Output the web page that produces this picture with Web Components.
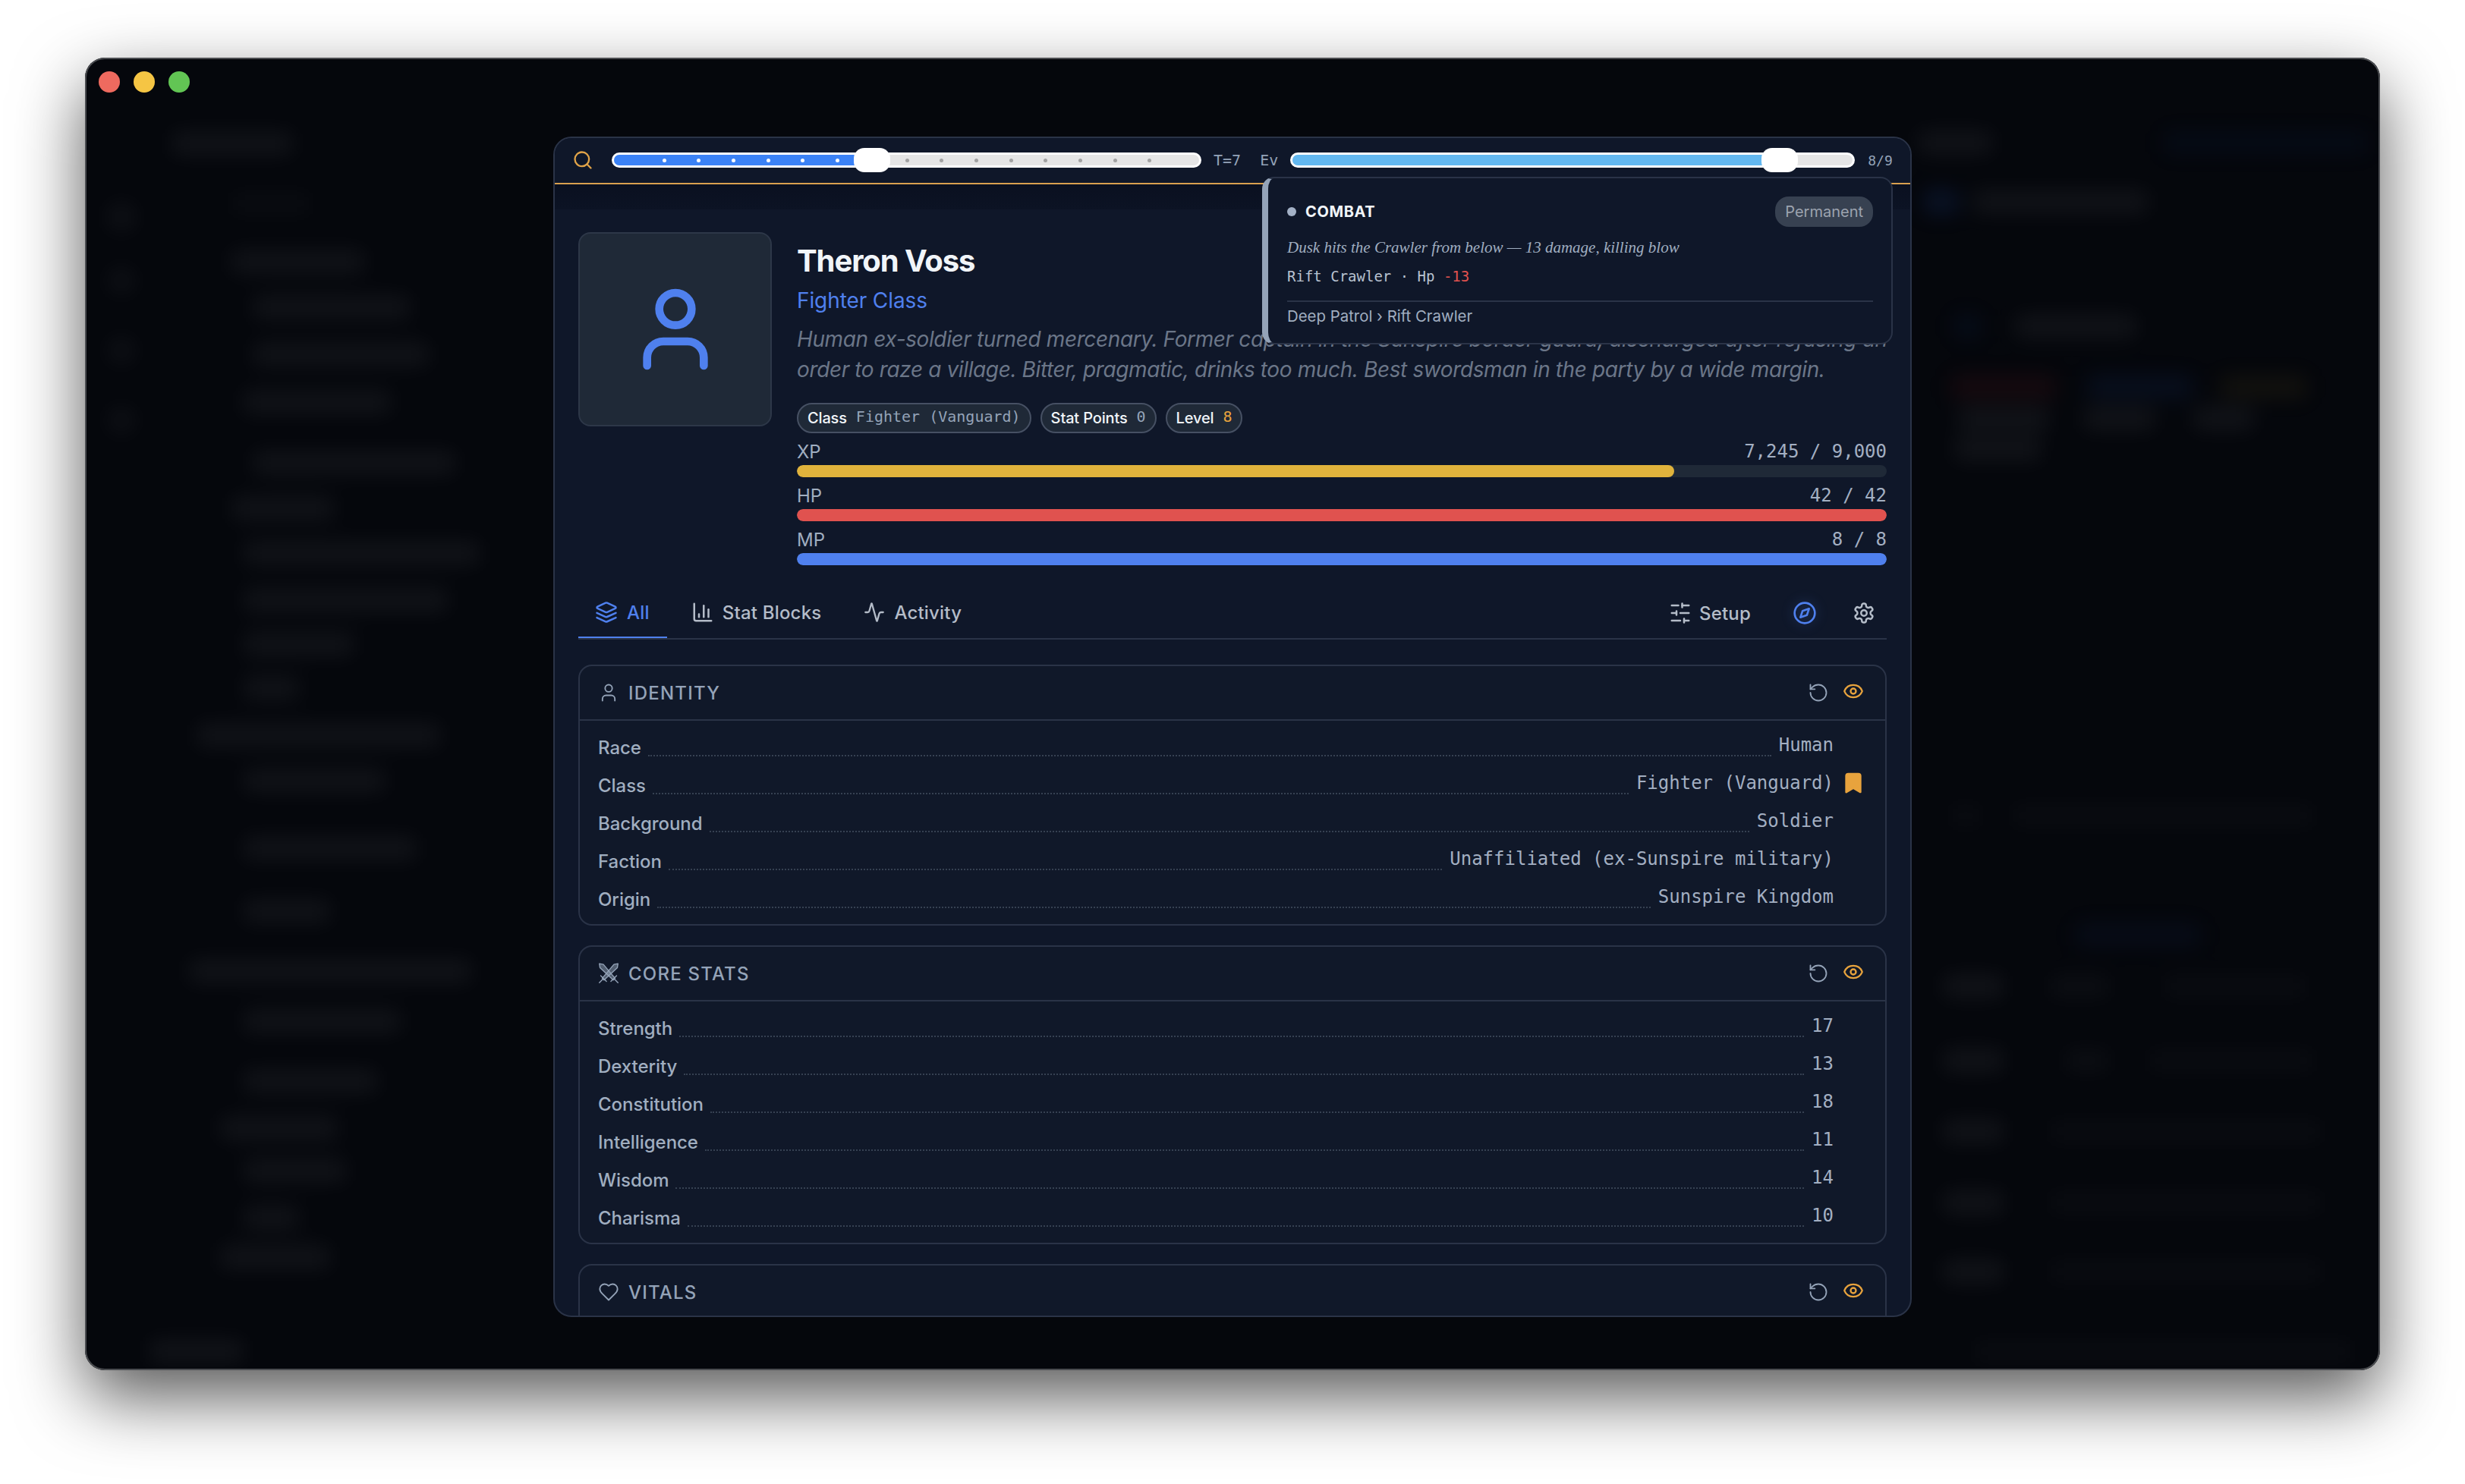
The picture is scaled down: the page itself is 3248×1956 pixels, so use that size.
<!DOCTYPE html>
<html>
<head>
<meta charset="utf-8">
<title>Theron Voss</title>
<style>
  html, body { margin: 0; background: #fff; }
  body { padding: 76px 112px 150px; font-family: Inter, "Liberation Sans", sans-serif; overflow: hidden; }
</style>
</head>
<body>
<mac-window>
  <app-backdrop></app-backdrop>
  <char-dialog>
    <top-bar slot="top"></top-bar>
    <event-tip slot="overlay" kind="COMBAT" tag="Permanent"
      line="Dusk hits the Crawler from below — 13 damage, killing blow"
      target="Rift Crawler · Hp " delta="-13" path="Deep Patrol › Rift Crawler"></event-tip>

    <char-header name="Theron Voss" role="Fighter Class"
      desc="Human ex-soldier turned mercenary. Former captain in the Sunspire border guard, discharged after refusing an<br>order to raze a village. Bitter, pragmatic, drinks too much. Best swordsman in the party by a wide margin.">
      <info-pill label="Class" value="Fighter (Vanguard)"></info-pill>
      <info-pill label="Stat Points" value="0"></info-pill>
      <info-pill label="Level" value="8" accent></info-pill>
      <stat-bar slot="bars" label="XP" value="7,245 / 9,000" pct="80.5" color="#e0b33c"></stat-bar>
      <stat-bar slot="bars" label="HP" value="42 / 42" pct="100" color="#e0524f"></stat-bar>
      <stat-bar slot="bars" label="MP" value="8 / 8" pct="100" color="#4f80ee"></stat-bar>
    </char-header>

    <tab-strip></tab-strip>

    <sheet-card title="IDENTITY" icon="user">
      <sheet-row label="Race" value="Human"></sheet-row>
      <sheet-row label="Class" value="Fighter (Vanguard)" mark></sheet-row>
      <sheet-row label="Background" value="Soldier"></sheet-row>
      <sheet-row label="Faction" value="Unaffiliated (ex-Sunspire military)"></sheet-row>
      <sheet-row label="Origin" value="Sunspire Kingdom"></sheet-row>
    </sheet-card>
    <sheet-card title="CORE STATS" icon="swords">
      <sheet-row label="Strength" value="17"></sheet-row>
      <sheet-row label="Dexterity" value="13"></sheet-row>
      <sheet-row label="Constitution" value="18"></sheet-row>
      <sheet-row label="Intelligence" value="11"></sheet-row>
      <sheet-row label="Wisdom" value="14"></sheet-row>
      <sheet-row label="Charisma" value="10"></sheet-row>
    </sheet-card>
    <sheet-card title="VITALS" icon="heart"></sheet-card>
  </char-dialog>
</mac-window>

<script>
const MONO = '"DejaVu Sans Mono", "Liberation Mono", monospace';

const ICONS = {
  search: '<circle cx="11" cy="11" r="8"/><path d="m21 21-4.3-4.3"/>',
  user: '<path d="M19 21v-2a4 4 0 0 0-4-4H9a4 4 0 0 0-4 4v2"/><circle cx="12" cy="7" r="4"/>',
  layers: '<path d="m12.83 2.18a2 2 0 0 0-1.66 0L2.6 6.08a1 1 0 0 0 0 1.83l8.58 3.91a2 2 0 0 0 1.66 0l8.58-3.9a1 1 0 0 0 0-1.83Z"/><path d="m22 17.65-9.17 4.16a2 2 0 0 1-1.66 0L2 17.65"/><path d="m22 12.65-9.17 4.16a2 2 0 0 1-1.66 0L2 12.65"/>',
  chart: '<path d="M3 3v16a2 2 0 0 0 2 2h16"/><path d="M18 17V9"/><path d="M13 17V5"/><path d="M8 17v-3"/>',
  activity: '<path d="M22 12h-2.48a2 2 0 0 0-1.93 1.46l-2.35 8.36a.25.25 0 0 1-.48 0L9.24 2.18a.25.25 0 0 0-.48 0l-2.35 8.36A2 2 0 0 1 4.49 12H2"/>',
  sliders: '<path d="M21 4h-7"/><path d="M10 4H3"/><path d="M21 12h-9"/><path d="M8 12H3"/><path d="M21 20h-5"/><path d="M12 20H3"/><path d="M14 2v4"/><path d="M8 10v4"/><path d="M16 18v4"/>',
  compass: '<circle cx="12" cy="12" r="10"/><path d="m16.24 7.76-2.12 6.36-6.36 2.12 2.12-6.36 6.36-2.12z"/>',
  gear: '<path d="M12.22 2h-.44a2 2 0 0 0-2 2v.18a2 2 0 0 1-1 1.73l-.43.25a2 2 0 0 1-2 0l-.15-.08a2 2 0 0 0-2.73.73l-.22.38a2 2 0 0 0 .73 2.73l.15.1a2 2 0 0 1 1 1.72v.51a2 2 0 0 1-1 1.74l-.15.09a2 2 0 0 0-.73 2.73l.22.38a2 2 0 0 0 2.73.73l.15-.08a2 2 0 0 1 2 0l.43.25a2 2 0 0 1 1 1.73V20a2 2 0 0 0 2 2h.44a2 2 0 0 0 2-2v-.18a2 2 0 0 1 1-1.73l.43-.25a2 2 0 0 1 2 0l.15.08a2 2 0 0 0 2.73-.73l.22-.39a2 2 0 0 0-.73-2.73l-.15-.08a2 2 0 0 1-1-1.74v-.5a2 2 0 0 1 1-1.74l.15-.09a2 2 0 0 0 .73-2.73l-.22-.38a2 2 0 0 0-2.73-.73l-.15.08a2 2 0 0 1-2 0l-.43-.25a2 2 0 0 1-1-1.73V4a2 2 0 0 0-2-2z"/><circle cx="12" cy="12" r="3"/>',
  undo: '<path d="M3 12a9 9 0 1 0 9-9 9.75 9.75 0 0 0-6.74 2.74L3 8"/><path d="M3 3v5h5"/>',
  eye: '<path d="M2.062 12.348a1 1 0 0 1 0-.696 10.75 10.75 0 0 1 19.876 0 1 1 0 0 1 0 .696 10.75 10.75 0 0 1-19.876 0"/><circle cx="12" cy="12" r="3"/>',
  heart: '<path d="M19 14c1.49-1.46 3-3.21 3-5.5A5.5 5.5 0 0 0 16.5 3c-1.76 0-3 .5-4.5 2-1.5-1.5-2.74-2-4.5-2A5.5 5.5 0 0 0 2 8.5c0 2.3 1.5 4.05 3 5.5l7 7Z"/>',
  swords: '<path fill="currentColor" fill-opacity=".5" d="M22.5 1 21.8 5.5 6.8 19.5 4.8 17.5 18 1.8Z"/><path fill="currentColor" fill-opacity=".5" d="M1.5 1 2.2 5.5 17.2 19.5 19.2 17.5 6 1.8Z"/><path d="M3 14.5 9.5 21M21 14.5 14.5 21M5.5 18.5 1.5 22.5M18.5 18.5 22.5 22.5"/>',
  bookmark: '<path d="m19 21-7-4-7 4V5a2 2 0 0 1 2-2h10a2 2 0 0 1 2 2v16z"/>',
};

class LuIcon extends HTMLElement {
  connectedCallback() {
    const size = this.getAttribute('size') || 28;
    const sw = this.getAttribute('stroke') || 2;
    const fill = this.hasAttribute('solid') ? 'currentColor' : 'none';
    this.attachShadow({ mode: 'open' }).innerHTML = `
      <style>:host { display: inline-flex; flex: none; } svg { display: block; }</style>
      <svg width="${size}" height="${size}" viewBox="0 0 24 24" fill="${fill}" stroke="currentColor"
        stroke-width="${sw}" stroke-linecap="round" stroke-linejoin="round">${ICONS[this.getAttribute('name')]}</svg>`;
  }
}
customElements.define('lu-icon', LuIcon);

class MacWindow extends HTMLElement {
  constructor() {
    super();
    this.attachShadow({ mode: 'open' }).innerHTML = `
      <style>
        :host {
          display: block; position: relative; width: 3024px; height: 1730px; box-sizing: border-box;
          border-radius: 26px; background: #05070c; overflow: hidden;
          box-shadow: 0 36px 90px rgba(0,0,0,.65);
        }
        .edge { position: absolute; inset: 0; border-radius: 26px; box-shadow: inset 0 0 0 2px #4a4c50; z-index: 4; }
        .lights { position: absolute; top: 18px; left: 18px; display: flex; gap: 18px; z-index: 3; }
        .lights span { width: 28px; height: 28px; border-radius: 50%; }
      </style>
      <div class="edge"></div>
      <div class="lights">
        <span style="background:#ee6a5f"></span><span style="background:#f5c544"></span><span style="background:#62c554"></span>
      </div>
      <slot></slot>`;
  }
}
customElements.define('mac-window', MacWindow);

// the app behind the modal, only ever seen through the blur
const GREY = 'rgba(255,255,255,.055)';
const BLUE = 'rgba(40,90,190,.16)';
const LEFT = [
  [189, [[226, 386, GREY]]], [268, [[304, 410, 'rgba(255,255,255,.025)']]], [345, [[304, 480, GREY]]],
  [405, [[333, 540, GREY]]], [467, [[333, 565, GREY]]], [530, [[320, 515, GREY]]], [610, [[333, 600, GREY]]],
  [670, [[305, 440, GREY]]], [729, [[321, 632, GREY]]], [791, [[321, 590, GREY]]], [849, [[321, 466, GREY]]],
  [907, [[321, 394, GREY]]], [969, [[259, 580, GREY]]], [1029, [[321, 507, GREY]]], [1118, [[321, 549, GREY]]],
  [1201, [[321, 435, GREY]]], [1280, [[249, 621, GREY]]], [1346, [[321, 528, GREY]]], [1425, [[321, 497, GREY]]],
  [1487, [[290, 445, GREY]]], [1543, [[321, 456, GREY]]], [1605, [[321, 394, GREY]]], [1657, [[290, 435, GREY]]],
  [1781, [[197, 321, GREY]]],
];
const RAIL = [[286, 40], [370, 36], [462, 36], [554, 36]];
const RIGHT = [
  [188, [[2527, 2625, GREY], [2850, 3120, 'rgba(40,90,190,.06)']]],
  [266, [[2535, 2580, BLUE], [2600, 2830, GREY]]],
  [430, [[2575, 2610, 'rgba(40,90,190,.08)'], [2655, 2815, GREY]]],
  [510, [[2570, 2710, 'rgba(190,40,40,.1)'], [2750, 2890, 'rgba(40,90,190,.1)'], [2925, 3040, 'rgba(190,150,40,.08)']]],
  [552, [[2580, 2700, GREY], [2745, 2840, GREY], [2890, 2970, GREY]]],
  [592, [[2575, 2690, GREY]]],
  [1075, [[2570, 2610, 'rgba(255,255,255,.025)'], [2650, 3050, 'rgba(255,255,255,.025)']]],
  [1232, [[2734, 2900, 'rgba(40,90,190,.07)']]],
  [1300, [[2560, 2640, GREY], [2700, 2780, 'rgba(255,255,255,.03)'], [2850, 3040, 'rgba(255,255,255,.025)']]],
  [1398, [[2560, 2640, GREY], [2720, 2780, 'rgba(255,255,255,.03)'], [2830, 3050, 'rgba(255,255,255,.025)']]],
  [1491, [[2560, 2640, GREY], [2700, 3060, 'rgba(255,255,255,.025)']]],
  [1585, [[2560, 2640, GREY], [2700, 3060, 'rgba(255,255,255,.025)']]],
  [1676, [[2560, 2640, GREY], [2700, 3060, 'rgba(255,255,255,.025)']]],
  [1781, [[2600, 3100, 'rgba(255,255,255,.025)']]],
];
const WIN_X = 112, WIN_Y = 76, ROW_H = 30, RAIL_W = 96;

function blurRows(rows, originX) {
  let y = WIN_Y;
  return rows.map(([cy, blobs]) => {
    const top = cy - ROW_H / 2 - y;
    y = cy + ROW_H / 2;
    let x = originX;
    const bits = blobs.map(([a, b, c]) => {
      const ml = a - x;
      x = b;
      return `<i style="margin-left:${ml}px;width:${b - a}px;background:${c}"></i>`;
    }).join('');
    return `<div class="row" style="margin-top:${top}px">${bits}</div>`;
  }).join('');
}

class AppBackdrop extends HTMLElement {
  constructor() {
    super();
    const rail = RAIL.map(([cy, s], i) => {
      const prev = i ? RAIL[i - 1][0] + RAIL[i - 1][1] / 2 : WIN_Y;
      return `<b style="margin-top:${cy - s / 2 - prev}px;width:${s}px;height:${s}px"></b>`;
    }).join('');
    this.attachShadow({ mode: 'open' }).innerHTML = `
      <style>
        :host { display: flex; height: 100%; filter: blur(14px); }
        .rail { width: ${RAIL_W}px; flex: none; display: flex; flex-direction: column; align-items: center; }
        .rail b { display: block; border-radius: 50%; background: rgba(255,255,255,.045); flex: none; }
        .col { flex: none; }
        .gap { flex: 1; }
        .row { display: flex; height: ${ROW_H}px; }
        .row i { display: block; height: 100%; border-radius: 6px; flex: none; }
      </style>
      <div class="rail">${rail}</div>
      <div class="col" style="width:560px">${blurRows(LEFT, WIN_X + RAIL_W)}</div>
      <div class="gap"></div>
      <div class="col" style="width:${3136 - 2500}px">${blurRows(RIGHT, 2500)}</div>`;
  }
}
customElements.define('app-backdrop', AppBackdrop);

class CharDialog extends HTMLElement {
  constructor() {
    super();
    this.attachShadow({ mode: 'open' }).innerHTML = `
      <style>
        :host {
          display: block; position: absolute; left: 617px; top: 104px; z-index: 2;
          width: 1790px; height: 1556px; box-sizing: border-box;
          background: #0f1729; border: 2px solid #2a3347; border-radius: 24px;
          color: #e5e7eb; font-family: Inter, "Liberation Sans", sans-serif;
        }
        .clip { height: 100%; border-radius: 22px; overflow: hidden; display: flex; flex-direction: column; }
        .scroll {
          flex: 1; min-height: 0; overflow: hidden; box-sizing: border-box;
          padding: 63px 31px 0 31px; display: flex; flex-direction: column;
          background: linear-gradient(#0a1020, #0c1324 33px, transparent 33px);
        }
      </style>
      <div class="clip">
        <slot name="top"></slot>
        <div class="scroll"><slot></slot></div>
      </div>
      <slot name="overlay"></slot>`;
  }
}
customElements.define('char-dialog', CharDialog);

class ScrubRange extends HTMLElement {
  connectedCallback() {
    const pos = +this.getAttribute('pos');
    const ticks = (this.getAttribute('ticks') || '').split(',').filter(Boolean).map(Number);
    const dots = ticks.map(t => {
      const p = (t + 0.5) / 17 * 100;
      return `<u style="left:${p}%;background:${p < pos ? '#fff' : '#a3a3a3'}"></u>`;
    }).join('');
    this.attachShadow({ mode: 'open' }).innerHTML = `
      <style>
        :host { display: block; position: relative; height: 20px; flex: none; }
        .track { height: 100%; box-sizing: border-box; border: 3px solid #fff; border-radius: 10px; background: #e5e5e5; overflow: hidden; }
        .fill { height: 100%; background: ${this.getAttribute('color')}; width: ${pos}%; }
        u { position: absolute; top: 8px; width: 5px; height: 5px; margin-left: -2px; border-radius: 50%; }
        .thumb { position: absolute; top: -6px; left: ${pos}%; margin-left: -24px; width: 48px; height: 32px; border-radius: 14px; background: #fff; }
      </style>
      <div class="track"><div class="fill"></div></div>${dots}<div class="thumb"></div>`;
  }
}
customElements.define('scrub-range', ScrubRange);

class TopBar extends HTMLElement {
  constructor() {
    super();
    this.attachShadow({ mode: 'open' }).innerHTML = `
      <style>
        :host {
          display: flex; align-items: center; height: 58px; flex: none; box-sizing: content-box;
          padding: 0 23px 1px; background: #0f1729; border-bottom: 2px solid #d9a04f;
          font: 20px ${MONO}; color: #94a3b8;
        }
        lu-icon { color: #e0a348; margin-right: 24px; }
        span { white-space: nowrap; }
      </style>
      <lu-icon name="search" size="28"></lu-icon>
      <scrub-range style="width:777px" pos="44.1" color="#3b82f6" ticks="1,2,3,4,5,6,8,9,10,11,12,13,14,15"></scrub-range>
      <span style="margin-left:16px">T=7</span>
      <span style="margin-left:25px">Ev</span>
      <scrub-range style="width:744px;margin-left:16px" pos="86.6" color="#63b8f0"></scrub-range>
      <span style="margin-left:17px;font-size:18px">8/9</span>`;
  }
}
customElements.define('top-bar', TopBar);

class EventTip extends HTMLElement {
  connectedCallback() {
    const a = n => this.getAttribute(n);
    this.attachShadow({ mode: 'open' }).innerHTML = `
      <style>
        :host {
          display: block; position: absolute; left: 932px; top: 51px; width: 831px; height: 221px;
          box-sizing: border-box; padding: 24px 24px 0 25px; background: #0f1729;
          border: 2px solid #2a3347; border-left: 8px solid #94a3b8; border-radius: 16px;
        }
        .head { display: flex; align-items: center; height: 40px; }
        .dot { width: 12px; height: 12px; border-radius: 50%; background: #a3b1c6; margin-right: 12px; }
        .kind { font-size: 20px; font-weight: 700; letter-spacing: .6px; color: #f1f5f9; }
        .tag { margin-left: auto; height: 40px; line-height: 40px; padding: 0 13px; border-radius: 18px; background: #374151; color: #9ca3af; font-size: 20px; }
        .line { font: italic 21px/26px "Liberation Serif", serif; color: #a0aec0; margin-top: 14px; }
        .fx { font: 19px/26px ${MONO}; color: #b8c2d0; margin-top: 12px; }
        .fx b { font-weight: 400; color: #e0524f; }
        .path { border-top: 2px solid #2a3347; margin-top: 19px; padding-top: 6px; font-size: 20.4px; line-height: 26px; color: #a0aec0; }
      </style>
      <div class="head"><span class="dot"></span><span class="kind">${a('kind')}</span><span class="tag">${a('tag')}</span></div>
      <div class="line">${a('line')}</div>
      <div class="fx">${a('target')}<b>${a('delta')}</b></div>
      <div class="path">${a('path')}</div>`;
  }
}
customElements.define('event-tip', EventTip);

class InfoPill extends HTMLElement {
  connectedCallback() {
    const accent = this.hasAttribute('accent');
    this.attachShadow({ mode: 'open' }).innerHTML = `
      <style>
        :host {
          display: inline-flex; align-items: center; gap: 12px; height: 40px; box-sizing: border-box;
          padding: 0 12px; border: 2px solid #465063; border-radius: 20px; background: #1f2937;
          font-size: 20px; font-weight: 500; letter-spacing: -.15px; color: #f1f5f9; white-space: nowrap;
        }
        b { font: 400 20px ${MONO}; letter-spacing: 0; color: ${accent ? '#e8a33d' : '#94a3b8'}; margin-bottom: 4px; }
      </style>
      <span>${this.getAttribute('label')}</span><b>${this.getAttribute('value')}</b>`;
  }
}
customElements.define('info-pill', InfoPill);

class StatBar extends HTMLElement {
  connectedCallback() {
    const a = n => this.getAttribute(n);
    this.attachShadow({ mode: 'open' }).innerHTML = `
      <style>
        :host { display: block; margin-top: 10px; }
        .top { display: flex; justify-content: space-between; align-items: center; height: 28px; margin-bottom: 4px; }
        .l { font-size: 24px; color: #a0aec0; }
        .v { font: 24px ${MONO}; color: #a3afc2; }
        .bar { height: 16px; border-radius: 8px; background: #1f2937; overflow: hidden; }
        .bar div { height: 100%; border-radius: 8px; width: ${a('pct')}%; background: ${a('color')}; }
      </style>
      <div class="top"><span class="l">${a('label')}</span><span class="v">${a('value')}</span></div>
      <div class="bar"><div></div></div>`;
  }
}
customElements.define('stat-bar', StatBar);

class CharHeader extends HTMLElement {
  connectedCallback() {
    const a = n => this.getAttribute(n);
    this.attachShadow({ mode: 'open' }).innerHTML = `
      <style>
        :host { display: flex; gap: 33px; flex: none; }
        .avatar {
          width: 255px; height: 256px; flex: none; box-sizing: border-box; display: flex; align-items: center; justify-content: center;
          background: #1f2937; border: 2px solid #2d3748; border-radius: 16px; color: #4f80ee;
        }
        .main { flex: 1; min-width: 0; padding-top: 14px; }
        h1 { margin: 0; font-size: 40px; line-height: 48px; font-weight: 700; letter-spacing: -1.1px; color: #f1f5f9; }
        .role { margin-top: 8px; font-size: 28px; line-height: 40px; letter-spacing: -.1px; color: #4f80ee; }
        .desc { margin-top: 11px; font-size: 28px; line-height: 40px; letter-spacing: -.38px; font-style: italic; color: #6b7688; white-space: nowrap; }
        .pills { display: flex; gap: 12px; margin-top: 24px; margin-bottom: 10px; }
      </style>
      <div class="avatar"><lu-icon name="user" size="128"></lu-icon></div>
      <div class="main">
        <h1>${a('name')}</h1>
        <div class="role">${a('role')}</div>
        <div class="desc">${a('desc')}</div>
        <div class="pills"><slot></slot></div>
        <slot name="bars"></slot>
      </div>`;
  }
}
customElements.define('char-header', CharHeader);

class TabStrip extends HTMLElement {
  constructor() {
    super();
    this.attachShadow({ mode: 'open' }).innerHTML = `
      <style>
        :host {
          display: flex; align-items: stretch; height: 66px; flex: none; margin-top: 30px;
          border-bottom: 2px solid #2a3347; font-size: 24px; font-weight: 500; letter-spacing: .2px; color: #b4bcc8;
        }
        .tab { display: flex; align-items: center; gap: 11px; padding: 0 24px 0 22px; border-bottom: 2px solid transparent; box-sizing: border-box; white-space: nowrap; }
        .tab.on { color: #4f80ee; border-bottom-color: #4f80ee; gap: 12px; padding-right: 23px; }
        .end { margin-left: auto; display: flex; align-items: center; padding-right: 15px; }
        .setup { display: flex; align-items: center; gap: 10px; margin-right: 55px; }
        .compass { color: #4f80ee; filter: drop-shadow(0 0 8px rgba(79,128,238,.35)); margin-right: 47px; }
      </style>
      <div class="tab on"><lu-icon name="layers" size="30"></lu-icon>All</div>
      <div class="tab" style="margin-left:10px"><lu-icon name="chart" size="30"></lu-icon>Stat Blocks</div>
      <div class="tab" style="margin-left:10px;gap:12px"><lu-icon name="activity" size="28"></lu-icon>Activity</div>
      <div class="end">
        <div class="setup"><lu-icon name="sliders" size="30"></lu-icon>Setup</div>
        <lu-icon class="compass" name="compass" size="32"></lu-icon>
        <lu-icon name="gear" size="30"></lu-icon>
      </div>`;
  }
}
customElements.define('tab-strip', TabStrip);

class SheetCard extends HTMLElement {
  connectedCallback() {
    const sw = this.getAttribute('icon') === 'swords' ? 1.2 : 1.6;
    this.attachShadow({ mode: 'open' }).innerHTML = `
      <style>
        :host {
          display: block; flex: none; margin-top: 33px; box-sizing: border-box;
          border: 2px solid #2a3347; border-radius: 18px; background: #101829;
        }
        :host(:not(:first-of-type)) { margin-top: 26px; }
        .head { display: flex; align-items: center; height: 70px; padding: 0 28px 0 24px; border-bottom: 2px solid #2a3347; color: #94a3b8; }
        .title { margin-left: 12px; font-size: 24px; font-weight: 500; letter-spacing: 1.2px; }
        .acts { margin-left: auto; display: flex; align-items: center; gap: 18px; }
        .eye { color: #e8a33d; margin-bottom: 4px; }
        .body { padding: 10px 0 8px; }
      </style>
      <div class="head">
        <lu-icon name="${this.getAttribute('icon')}" size="28" stroke="${sw}"></lu-icon>
        <span class="title">${this.getAttribute('title')}</span>
        <span class="acts"><lu-icon name="undo" size="28" stroke="1.6"></lu-icon><lu-icon class="eye" name="eye" size="28"></lu-icon></span>
      </div>
      <div class="body"><slot></slot></div>`;
  }
}
customElements.define('sheet-card', SheetCard);

class SheetRow extends HTMLElement {
  connectedCallback() {
    const mark = this.hasAttribute('mark') ? '<lu-icon name="bookmark" size="32" solid></lu-icon>' : '';
    this.attachShadow({ mode: 'open' }).innerHTML = `
      <style>
        :host { display: flex; align-items: center; height: 50px; padding: 0 24px; font-size: 24px; font-weight: 500; letter-spacing: -.05px; color: #a0aec0; }
        .dots { flex: 1; margin: 22px 10px 0 9px; border-bottom: 2px dotted #364152; }
        .val { font: 24px ${MONO}; letter-spacing: 0; color: #a3afc2; margin-bottom: 6px; white-space: nowrap; }
        .tail { width: 44px; flex: none; display: flex; justify-content: flex-end; color: #e8a33d; padding-right: 2px; box-sizing: border-box; margin-bottom: 6px; }
      </style>
      <span>${this.getAttribute('label')}</span><span class="dots"></span>
      <span class="val">${this.getAttribute('value')}</span><span class="tail">${mark}</span>`;
  }
}
customElements.define('sheet-row', SheetRow);
</script>
</body>
</html>
